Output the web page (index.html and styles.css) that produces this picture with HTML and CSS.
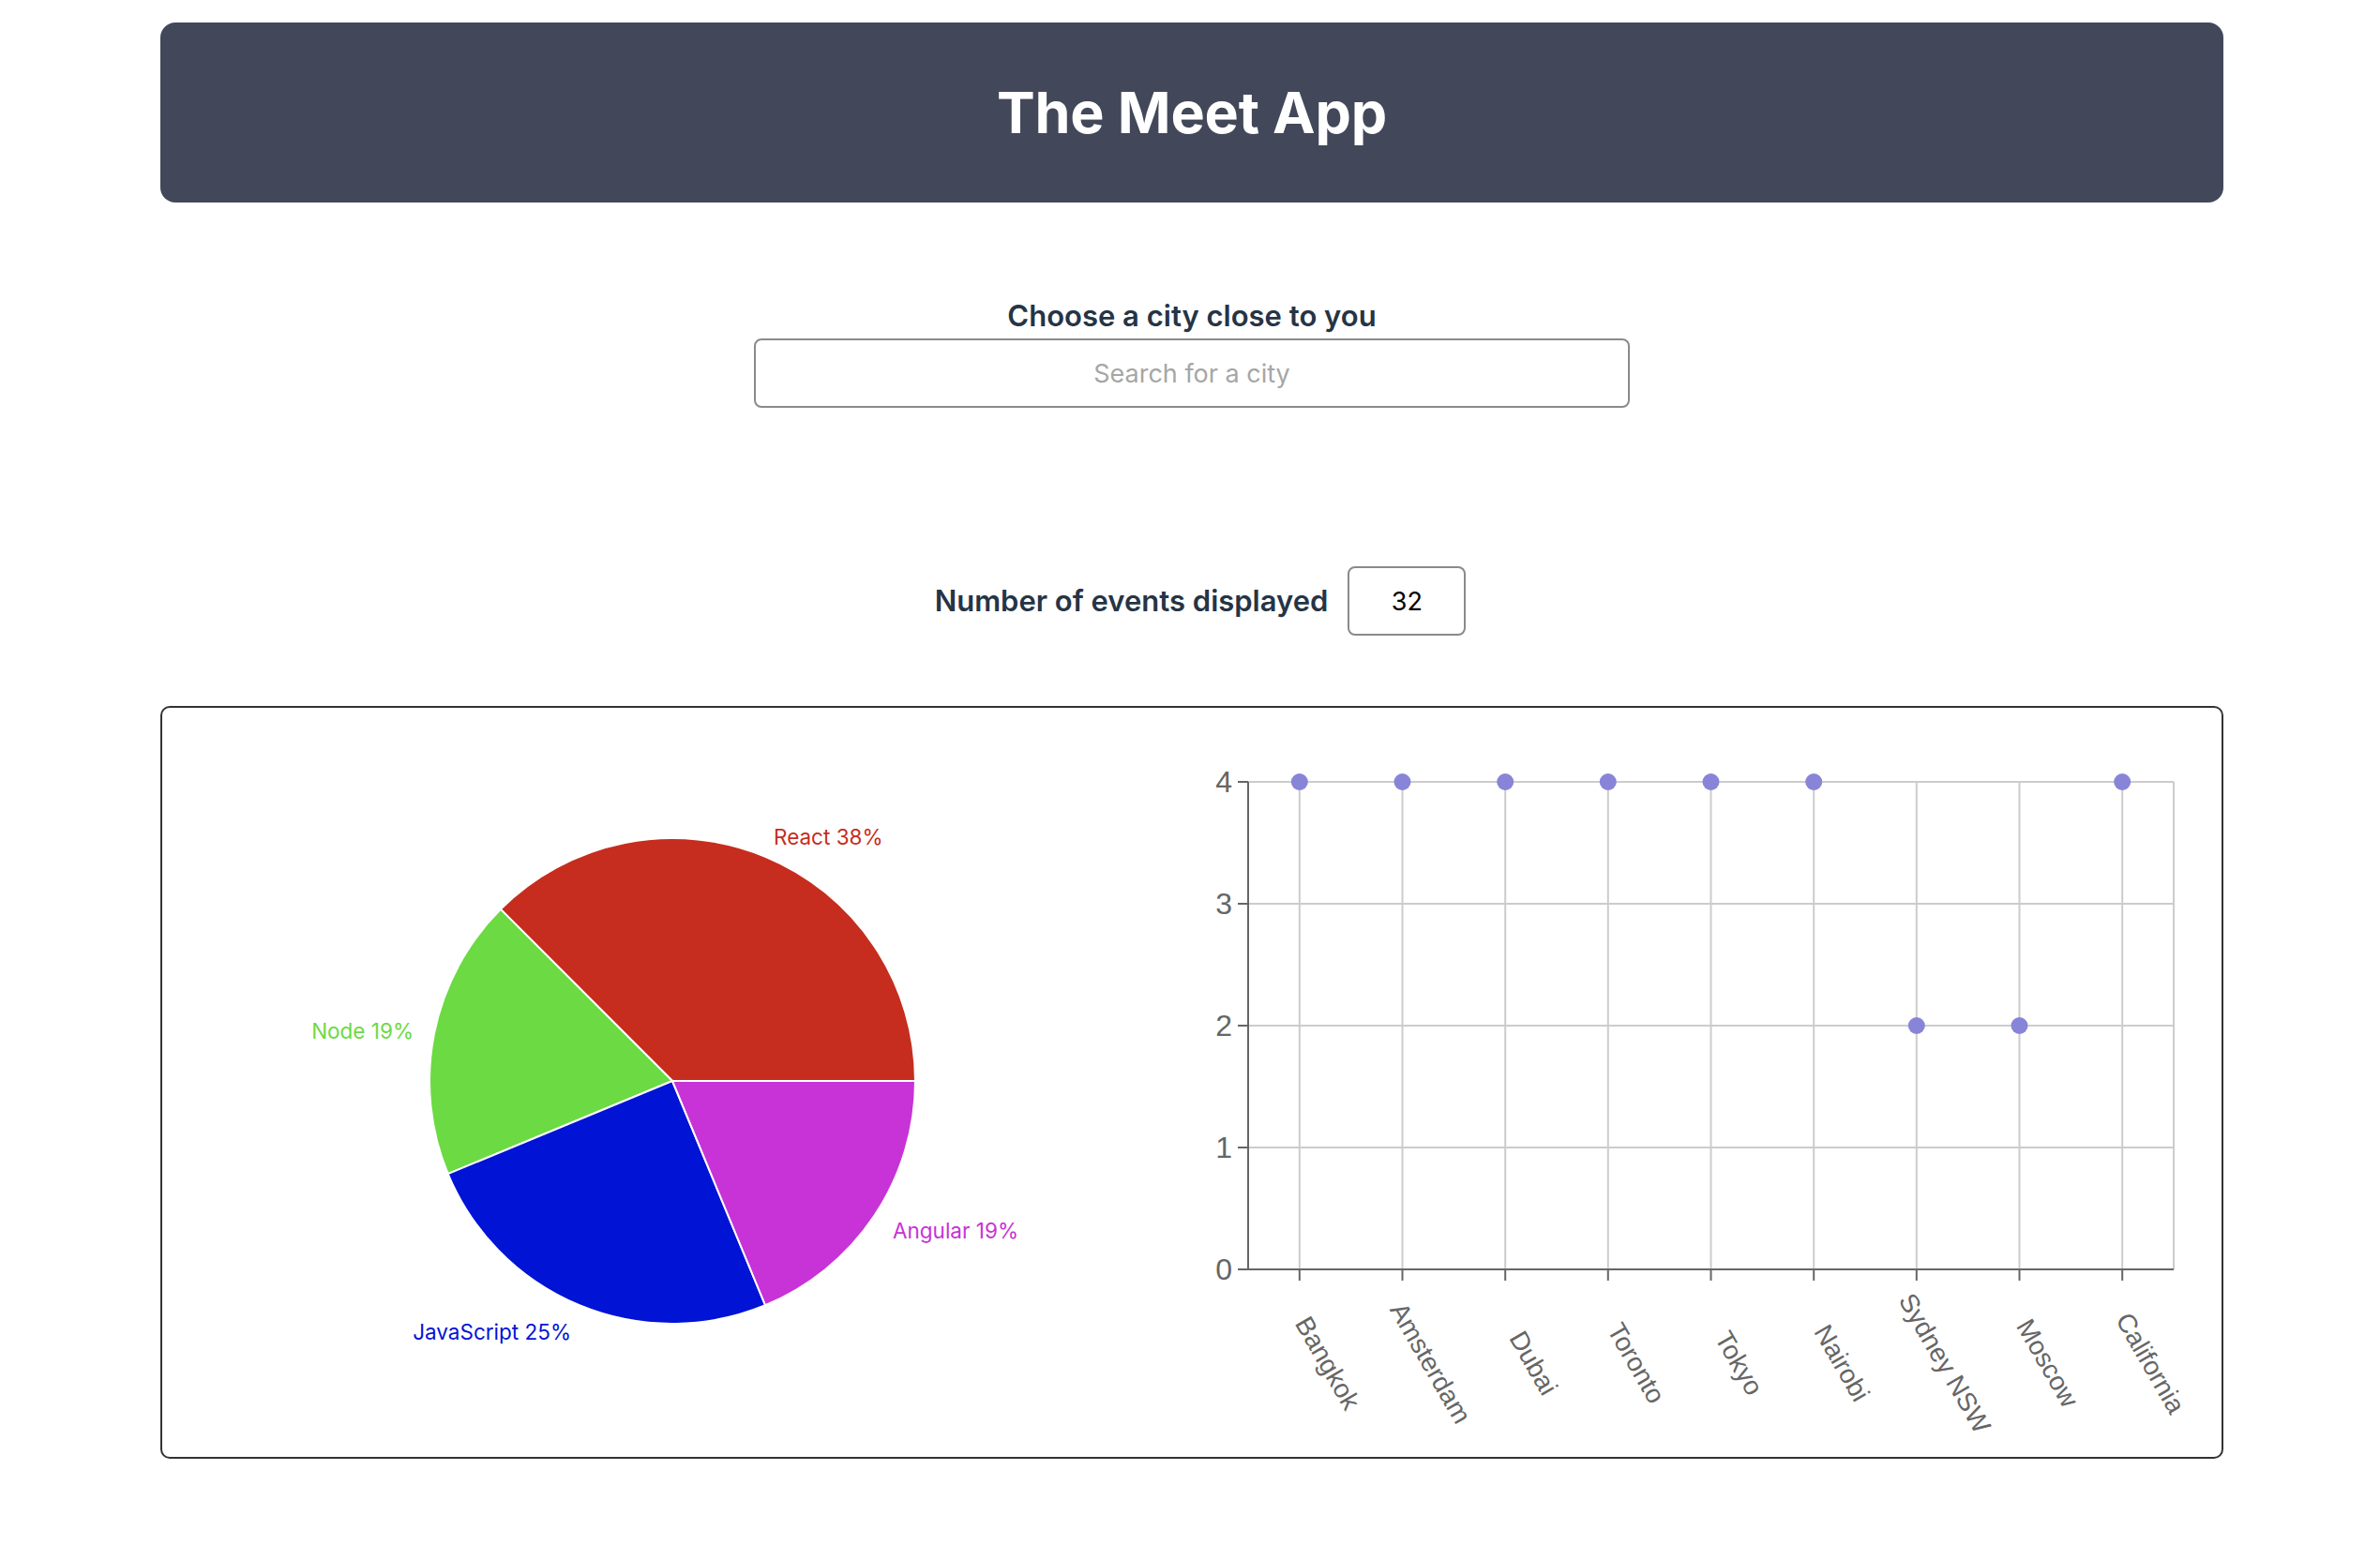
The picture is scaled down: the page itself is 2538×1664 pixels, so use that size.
FILE: index.html
```html
<!DOCTYPE html>
<html lang="en">
<head>
<meta charset="utf-8">
<title>The Meet App</title>
<link rel="stylesheet" href="styles.css">
</head>
<body>
<div class="app">
  <header class="app-header">
    <h1 class="app-title">The Meet App</h1>
  </header>

  <section class="city-search">
    <label class="field-label" for="city">Choose a city close to you</label>
    <input id="city" class="city-input" type="text" placeholder="Search for a city">
  </section>

  <section class="number-of-events">
    <label class="field-label" for="num">Number of events displayed</label>
    <input id="num" class="number-input" type="text" value="32">
  </section>

  <section class="charts">
    <svg class="chart pie-chart" viewBox="0 0 1098 798" width="1098" height="798">
      <g class="slices">
        <path class="slice react" d="M544,398 L803,398 A259,259 0 0 0 360.86,214.86 Z"/>
        <path class="slice node" d="M544,398 L360.86,214.86 A259,259 0 0 0 304.72,497.11 Z"/>
        <path class="slice js" d="M544,398 L304.72,497.11 A259,259 0 0 0 643.11,637.28 Z"/>
        <path class="slice angular" d="M544,398 L643.11,637.28 A259,259 0 0 0 803,398 Z"/>
      </g>
      <text class="pie-label react-t" x="652" y="137" text-anchor="start">React 38%</text>
      <text class="pie-label node-t" x="268" y="344" text-anchor="end">Node 19%</text>
      <text class="pie-label js-t" x="436" y="665" text-anchor="end">JavaScript 25%</text>
      <text class="pie-label angular-t" x="779" y="557" text-anchor="start">Angular 19%</text>
    </svg>

    <svg class="chart scatter-chart" viewBox="0 0 1098 798" width="1098" height="798">
      <g class="grid">
        <line x1="60" y1="79" x2="1047" y2="79"/>
        <line x1="60" y1="209" x2="1047" y2="209"/>
        <line x1="60" y1="339" x2="1047" y2="339"/>
        <line x1="60" y1="469" x2="1047" y2="469"/>
        <line x1="60" y1="599" x2="1047" y2="599"/>
        <line x1="114.8" y1="79" x2="114.8" y2="599"/>
        <line x1="224.5" y1="79" x2="224.5" y2="599"/>
        <line x1="334.2" y1="79" x2="334.2" y2="599"/>
        <line x1="443.8" y1="79" x2="443.8" y2="599"/>
        <line x1="553.5" y1="79" x2="553.5" y2="599"/>
        <line x1="663.2" y1="79" x2="663.2" y2="599"/>
        <line x1="772.8" y1="79" x2="772.8" y2="599"/>
        <line x1="882.5" y1="79" x2="882.5" y2="599"/>
        <line x1="992.2" y1="79" x2="992.2" y2="599"/>
        <line x1="1047" y1="79" x2="1047" y2="599"/>
      </g>
      <g class="axis">
        <line x1="60" y1="79" x2="60" y2="599"/>
        <line x1="60" y1="599" x2="1047" y2="599"/>
        <line x1="49" y1="79" x2="60" y2="79"/>
        <line x1="49" y1="209" x2="60" y2="209"/>
        <line x1="49" y1="339" x2="60" y2="339"/>
        <line x1="49" y1="469" x2="60" y2="469"/>
        <line x1="49" y1="599" x2="60" y2="599"/>
        <line x1="114.8" y1="599" x2="114.8" y2="611"/>
        <line x1="224.5" y1="599" x2="224.5" y2="611"/>
        <line x1="334.2" y1="599" x2="334.2" y2="611"/>
        <line x1="443.8" y1="599" x2="443.8" y2="611"/>
        <line x1="553.5" y1="599" x2="553.5" y2="611"/>
        <line x1="663.2" y1="599" x2="663.2" y2="611"/>
        <line x1="772.8" y1="599" x2="772.8" y2="611"/>
        <line x1="882.5" y1="599" x2="882.5" y2="611"/>
        <line x1="992.2" y1="599" x2="992.2" y2="611"/>
      </g>
      <g class="y-ticks">
        <text x="43" y="79">4</text>
        <text x="43" y="209">3</text>
        <text x="43" y="339">2</text>
        <text x="43" y="469">1</text>
        <text x="43" y="599">0</text>
      </g>
      <g class="x-ticks">
        <text transform="translate(144.8 699) rotate(60)">Bangkok</text>
        <text transform="translate(254.5 699) rotate(60)">Amsterdam</text>
        <text transform="translate(364.2 699) rotate(60)">Dubai</text>
        <text transform="translate(473.8 699) rotate(60)">Toronto</text>
        <text transform="translate(583.5 699) rotate(60)">Tokyo</text>
        <text transform="translate(693.2 699) rotate(60)">Nairobi</text>
        <text transform="translate(802.8 699) rotate(60)">Sydney NSW</text>
        <text transform="translate(912.5 699) rotate(60)">Moscow</text>
        <text transform="translate(1022.2 699) rotate(60)">California</text>
      </g>
      <g class="dots">
        <circle cx="114.8" cy="79" r="9"/>
        <circle cx="224.5" cy="79" r="9"/>
        <circle cx="334.2" cy="79" r="9"/>
        <circle cx="443.8" cy="79" r="9"/>
        <circle cx="553.5" cy="79" r="9"/>
        <circle cx="663.2" cy="79" r="9"/>
        <circle cx="772.8" cy="339" r="9"/>
        <circle cx="882.5" cy="339" r="9"/>
        <circle cx="992.2" cy="79" r="9"/>
      </g>
    </svg>
  </section>
</div>
</body>
</html>
```

FILE: styles.css
```css
* {
  box-sizing: border-box;
}

body {
  margin: 0;
  background: #ffffff;
  font-family: Inter, "Noto Sans", "Liberation Sans", sans-serif;
  color: #263445;
}

.app {
  width: 2200px;
  margin: 24px 0 0 171px;
  display: flex;
  flex-direction: column;
  align-items: center;
}

.app-header {
  width: 100%;
  height: 192px;
  background: #424859;
  border-radius: 16px;
  display: flex;
  align-items: center;
  justify-content: center;
}

.app-title {
  margin: 0;
  color: #ffffff;
  font-size: 61px;
  font-weight: 700;
  line-height: 1;
  letter-spacing: -0.2px;
}

.field-label {
  font-size: 31px;
  font-weight: 600;
  line-height: 34px;
  color: #263445;
}

.city-search {
  margin-top: 104px;
  display: flex;
  flex-direction: column;
  align-items: center;
  gap: 7px;
}

.city-input {
  width: 934px;
  height: 74px;
  border: 2px solid #8a8a8a;
  border-radius: 8px;
  font-family: Inter, "Noto Sans", sans-serif;
  font-size: 27px;
  text-align: center;
  color: #000;
  outline: none;
}

.city-input::placeholder {
  color: #a6a6a6;
}

.number-of-events {
  margin-top: 169px;
  margin-left: 18px;
  display: flex;
  align-items: center;
  gap: 21px;
}

.number-input {
  width: 126px;
  height: 74px;
  border: 2px solid #8a8a8a;
  border-radius: 8px;
  font-family: Inter, "Noto Sans", sans-serif;
  font-size: 27px;
  text-align: center;
  color: #000;
  outline: none;
}

.charts {
  margin-top: 75px;
  width: 100%;
  height: 803px;
  border: 2px solid #333333;
  border-radius: 10px;
  display: flex;
}

.chart {
  display: block;
  flex: 0 0 1098px;
}

.slice {
  stroke: #ffffff;
  stroke-width: 2;
}

.react { fill: #c62d1e; }
.node { fill: #6cda42; }
.js { fill: #0113d5; }
.angular { fill: #c733d6; }

.pie-label {
  font-family: Inter, "Noto Sans", sans-serif;
  font-size: 22.5px;
  dominant-baseline: central;
}

.react-t { fill: #c62d1e; }
.node-t { fill: #6cda42; }
.js-t { fill: #0113d5; }
.angular-t { fill: #c733d6; }

.grid line {
  stroke: #cccccc;
  stroke-width: 2;
}

.axis line {
  stroke: #666666;
  stroke-width: 2;
}

.y-ticks text {
  font-family: "Liberation Sans", Arial, sans-serif;
  font-size: 32px;
  fill: #666666;
  text-anchor: end;
  dominant-baseline: central;
}

.x-ticks text {
  font-family: "Liberation Sans", Arial, sans-serif;
  font-size: 28px;
  fill: #666666;
  text-anchor: middle;
  dominant-baseline: central;
}

.dots circle {
  fill: #8884d8;
}
```
